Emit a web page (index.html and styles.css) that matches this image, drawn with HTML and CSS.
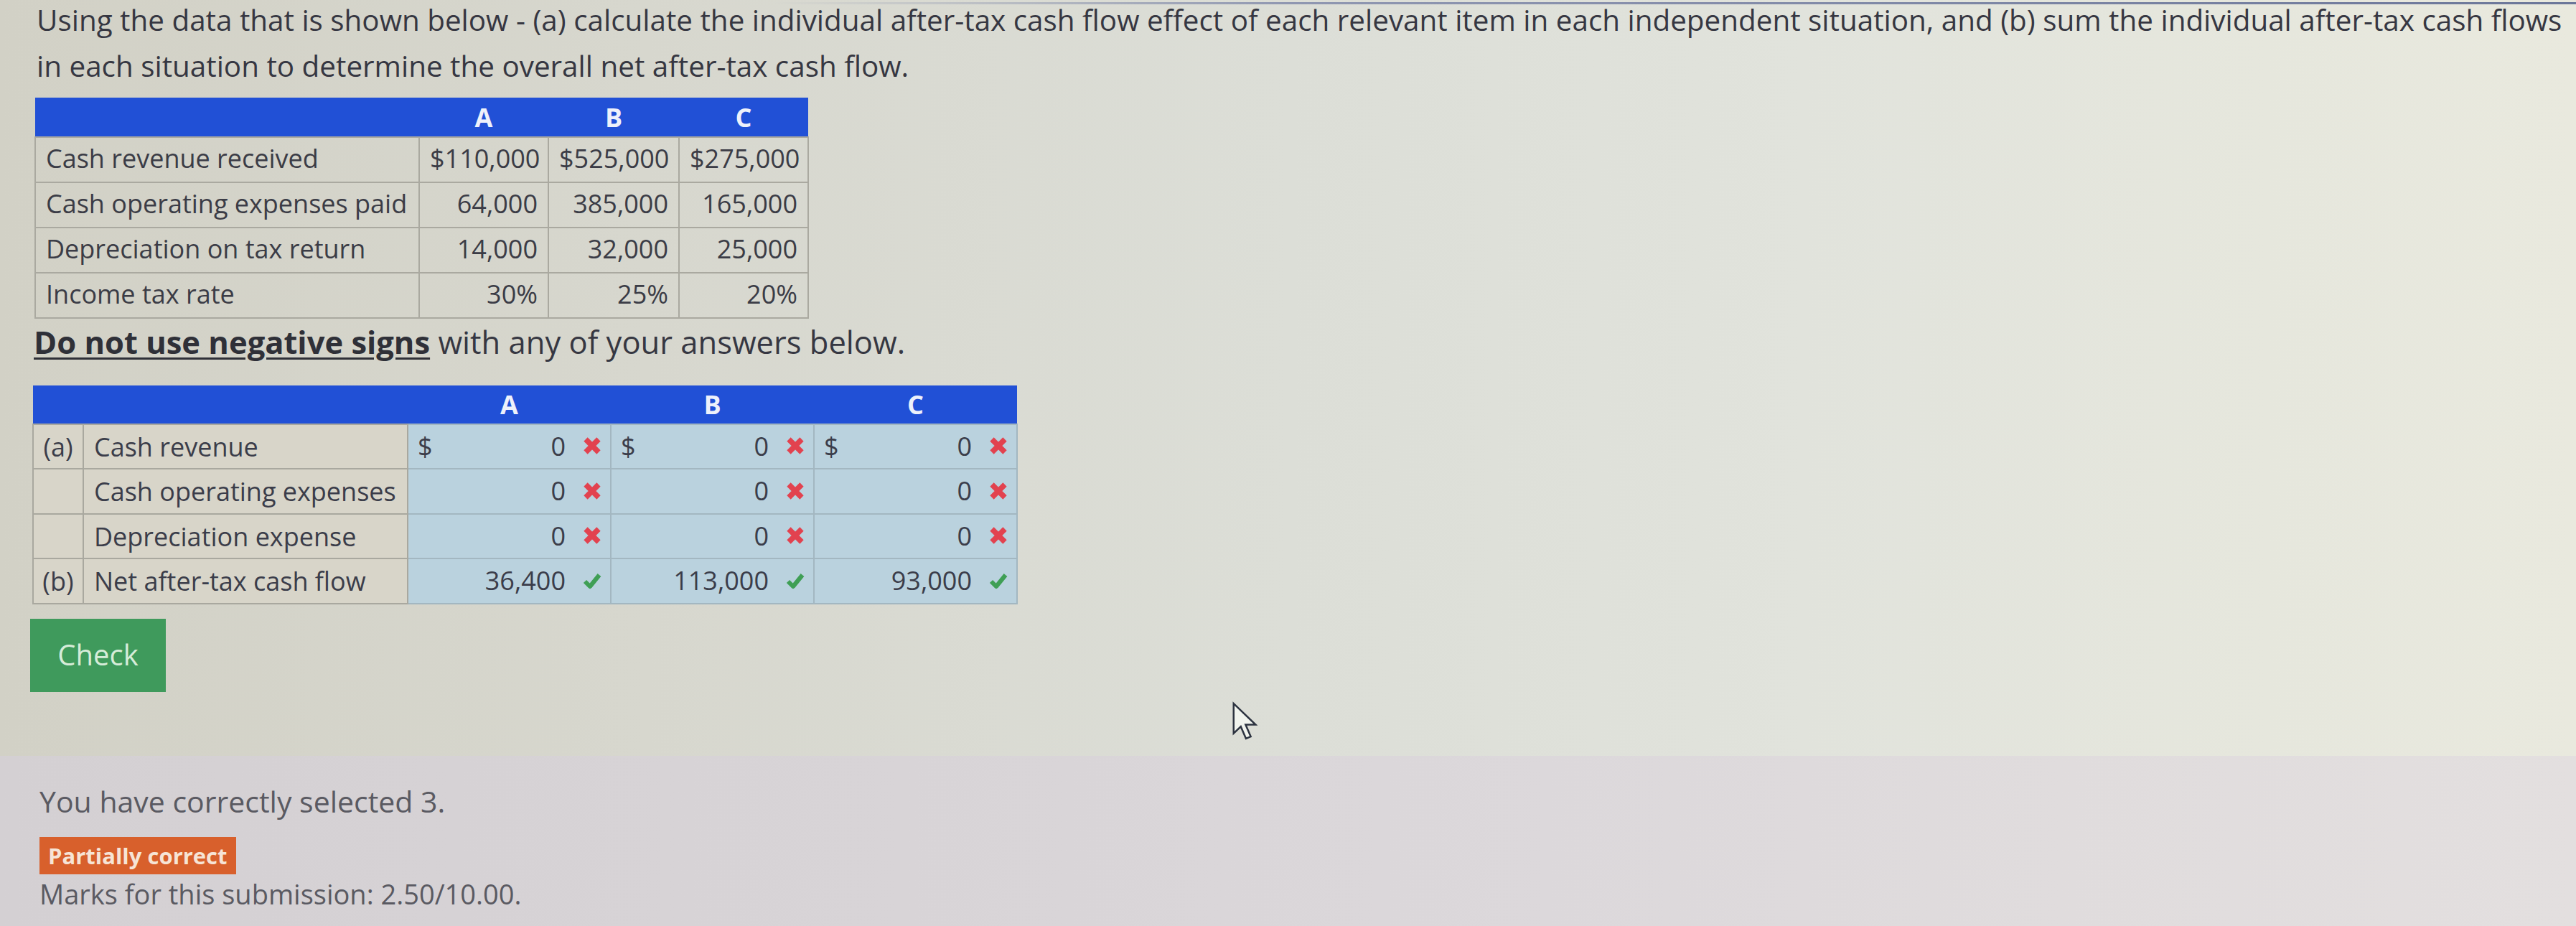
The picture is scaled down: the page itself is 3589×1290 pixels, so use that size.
FILE: index.html
```html
<!DOCTYPE html>
<html lang="en">
<head>
<meta charset="utf-8">
<title>After-tax cash flow</title>
<link rel="stylesheet" href="styles.css">
</head>
<body>
<section class="question">
  <p class="prompt">Using the data that is shown below - (a) calculate the individual after-tax cash flow effect of each relevant item in each independent situation, and (b) sum the individual after-tax cash flows<br>in each situation to determine the overall net after-tax cash flow.</p>

  <table class="data">
    <colgroup><col class="c-label"><col class="c-a"><col class="c-b"><col class="c-c"></colgroup>
    <thead>
      <tr><th></th><th>A</th><th>B</th><th>C</th></tr>
    </thead>
    <tbody>
      <tr><td class="lbl">Cash revenue received</td><td>$110,000</td><td>$525,000</td><td>$275,000</td></tr>
      <tr><td class="lbl">Cash operating expenses paid</td><td>64,000</td><td>385,000</td><td>165,000</td></tr>
      <tr><td class="lbl">Depreciation on tax return</td><td>14,000</td><td>32,000</td><td>25,000</td></tr>
      <tr><td class="lbl">Income tax rate</td><td>30%</td><td>25%</td><td>20%</td></tr>
    </tbody>
  </table>

  <p class="note"><strong class="neg">Do not use negative signs</strong> with any of your answers below.</p>

  <table class="answers">
    <colgroup><col class="c-pre"><col class="c-lab"><col class="c-val"><col class="c-val"><col class="c-val"></colgroup>
    <thead>
      <tr><th colspan="2"></th><th>A</th><th>B</th><th>C</th></tr>
    </thead>
    <tbody>
      <tr class="r1">
        <td class="pre">(a)</td><td class="lab">Cash revenue</td>
        <td class="val"><div class="cell"><span class="cur">$</span><span class="num">0</span><span class="mark"><svg viewBox="0 0 26 26"><path class="x" d="M4 4 L22 22 M22 4 L4 22"/></svg></span></div></td>
        <td class="val"><div class="cell"><span class="cur">$</span><span class="num">0</span><span class="mark"><svg viewBox="0 0 26 26"><path class="x" d="M4 4 L22 22 M22 4 L4 22"/></svg></span></div></td>
        <td class="val"><div class="cell"><span class="cur">$</span><span class="num">0</span><span class="mark"><svg viewBox="0 0 26 26"><path class="x" d="M4 4 L22 22 M22 4 L4 22"/></svg></span></div></td>
      </tr>
      <tr class="r2">
        <td class="pre"></td><td class="lab">Cash operating expenses</td>
        <td class="val"><div class="cell"><span class="cur"></span><span class="num">0</span><span class="mark"><svg viewBox="0 0 26 26"><path class="x" d="M4 4 L22 22 M22 4 L4 22"/></svg></span></div></td>
        <td class="val"><div class="cell"><span class="cur"></span><span class="num">0</span><span class="mark"><svg viewBox="0 0 26 26"><path class="x" d="M4 4 L22 22 M22 4 L4 22"/></svg></span></div></td>
        <td class="val"><div class="cell"><span class="cur"></span><span class="num">0</span><span class="mark"><svg viewBox="0 0 26 26"><path class="x" d="M4 4 L22 22 M22 4 L4 22"/></svg></span></div></td>
      </tr>
      <tr class="r3">
        <td class="pre"></td><td class="lab">Depreciation expense</td>
        <td class="val"><div class="cell"><span class="cur"></span><span class="num">0</span><span class="mark"><svg viewBox="0 0 26 26"><path class="x" d="M4 4 L22 22 M22 4 L4 22"/></svg></span></div></td>
        <td class="val"><div class="cell"><span class="cur"></span><span class="num">0</span><span class="mark"><svg viewBox="0 0 26 26"><path class="x" d="M4 4 L22 22 M22 4 L4 22"/></svg></span></div></td>
        <td class="val"><div class="cell"><span class="cur"></span><span class="num">0</span><span class="mark"><svg viewBox="0 0 26 26"><path class="x" d="M4 4 L22 22 M22 4 L4 22"/></svg></span></div></td>
      </tr>
      <tr class="r4">
        <td class="pre">(b)</td><td class="lab">Net after-tax cash flow</td>
        <td class="val"><div class="cell"><span class="cur"></span><span class="num">36,400</span><span class="mark"><svg viewBox="0 0 26 26"><path class="ok" d="M3 14 L10 21 L23 5"/></svg></span></div></td>
        <td class="val"><div class="cell"><span class="cur"></span><span class="num">113,000</span><span class="mark"><svg viewBox="0 0 26 26"><path class="ok" d="M3 14 L10 21 L23 5"/></svg></span></div></td>
        <td class="val"><div class="cell"><span class="cur"></span><span class="num">93,000</span><span class="mark"><svg viewBox="0 0 26 26"><path class="ok" d="M3 14 L10 21 L23 5"/></svg></span></div></td>
      </tr>
    </tbody>
  </table>

  <button class="check" type="button">Check</button>
</section>

<section class="feedback">
  <p class="selected">You have correctly selected 3.</p>
  <span class="badge">Partially correct</span>
  <p class="marks">Marks for this submission: 2.50/10.00.</p>
</section>

<svg class="cursor" viewBox="0 0 13 20" aria-hidden="true"><path d="M1 1 L1 16 L4.6 12.6 L7.2 18.6 L9.6 17.6 L7 11.6 L12 11.6 Z"/></svg>
</body>
</html>
```

FILE: styles.css
```css
* { box-sizing: border-box; }

html, body {
  margin: 0;
  padding: 0;
}

body {
  width: 3589px;
  height: 1290px;
  overflow: hidden;
  position: relative;
  font-family: "Open Sans", "Noto Sans", "DejaVu Sans", sans-serif;
  color: #3c3d48;
  background: #dcdcd4;
}

/* ---------- question area ---------- */
.question {
  height: 1053px;
  padding: 0 0 0 45px;
  background:
    linear-gradient(to right, rgba(110,120,160,0) 0%, rgba(110,120,160,0) 30%, rgba(110,120,160,.7) 50%, #6b7699 100%) 0 3px / 100% 3px no-repeat,
    linear-gradient(to right, #d2d1c6 0%, #d7d7ce 25%, #dcded7 50%, #e1e3dc 70%, #e6e7dd 88%, #e9e9de 100%);
  overflow: hidden;
}

.prompt {
  margin: -4px 0 0 6px;
  font-size: 40.4px;
  line-height: 64px;
  white-space: nowrap;
  color: #363742;
}

/* ---------- data table ---------- */
.data {
  margin: 12px 0 0 3px;
  border-collapse: collapse;
  table-layout: fixed;
  width: 1077px;
  font-size: 36px;
}
.data .c-label { width: 535px; }
.data .c-a { width: 180px; }
.data .c-b { width: 182px; }
.data .c-c { width: 180px; }

.data th {
  height: 55px;
  padding: 0;
  background: #2150d6;
  color: #eef1fb;
  font-weight: 700;
  text-align: center;
  border: none;
}
.data td {
  height: 63px;
  padding: 0 14px 4px 14px;
  text-align: right;
  border: 2px solid #aaa9a0;
  color: #3b3c46;
  white-space: nowrap;
}
.data td.lbl { text-align: left; }

/* ---------- note ---------- */
.note {
  margin: 3px 0 0 2px;
  font-size: 43.5px;
  line-height: 60px;
  color: #363742;
}
.neg {
  font-weight: 700;
  text-decoration: underline;
  text-decoration-thickness: 3px;
  text-underline-offset: 5px;
  color: #2f3038;
}

/* ---------- answers table ---------- */
.answers {
  margin: 30px 0 0 0;
  border-collapse: collapse;
  table-layout: fixed;
  width: 1370px;
  font-size: 36px;
}
.answers .c-pre { width: 70px; }
.answers .c-lab { width: 452px; }
.answers .c-val { width: 283px; }

.answers th {
  height: 54px;
  padding: 0;
  background: #2150d6;
  color: #eef1fb;
  font-weight: 700;
  text-align: center;
  border: none;
}
.answers td {
  padding: 0;
  border: 2px solid #a9a89f;
  white-space: nowrap;
  color: #3b3d4a;
}
.answers tr.r1 td, .answers tr.r3 td { height: 62px; }
.answers tr.r2 td, .answers tr.r4 td { height: 63px; }

.answers td.pre {
  text-align: center;
  background: #d8d5c9;
}
.answers td.lab {
  padding-left: 14px;
  background: #d8d5c9;
}
.answers td.val {
  background: #bad2de;
  border-color: #a3b7c1;
}

.cell {
  display: flex;
  align-items: center;
  padding: 0 12px 2px 13px;
}
.cur {
  width: 24px;
}
.num {
  flex: 1;
  text-align: right;
}
.mark {
  width: 26px;
  height: 26px;
  margin-left: 24px;
  display: flex;
}
.mark svg {
  width: 26px;
  height: 26px;
}
.mark .x {
  stroke: #e2424f;
  stroke-width: 7.5;
  fill: none;
}
.mark .ok {
  stroke: #3f9f55;
  stroke-width: 6;
  fill: none;
  stroke-linejoin: round;
}

/* ---------- check button ---------- */
.check {
  display: block;
  margin: 20px 0 0 -3px;
  width: 189px;
  height: 102px;
  padding: 0 0 4px 0;
  border: none;
  background: #3f9a5c;
  color: #d6ecd9;
  font-family: inherit;
  font-size: 40px;
  text-align: center;
}

/* ---------- feedback ---------- */
.feedback {
  height: 237px;
  padding: 33px 0 0 55px;
  background: linear-gradient(to right, #d4d0d3 0%, #d8d4d7 35%, #dcd8db 60%, #e0dcdd 80%, #e3dfdf 100%);
  color: #5a5a62;
}
.selected {
  margin: 0;
  font-size: 41px;
  line-height: 60px;
}
.badge {
  display: inline-block;
  margin-top: 20px;
  padding: 6px 12px;
  background: #d8602c;
  color: #f6e4d6;
  font-weight: 700;
  font-size: 31px;
  line-height: 40px;
  vertical-align: top;
}
.marks {
  margin: 0;
  font-size: 38px;
  line-height: 55px;
}

/* ---------- mouse pointer over the page ---------- */
.cursor {
  position: absolute;
  left: 1716px;
  top: 977px;
  width: 36px;
  height: 56px;
}
.cursor path {
  fill: #f1f4ee;
  stroke: #2c3340;
  stroke-width: 0.9;
  stroke-linejoin: miter;
}
```
